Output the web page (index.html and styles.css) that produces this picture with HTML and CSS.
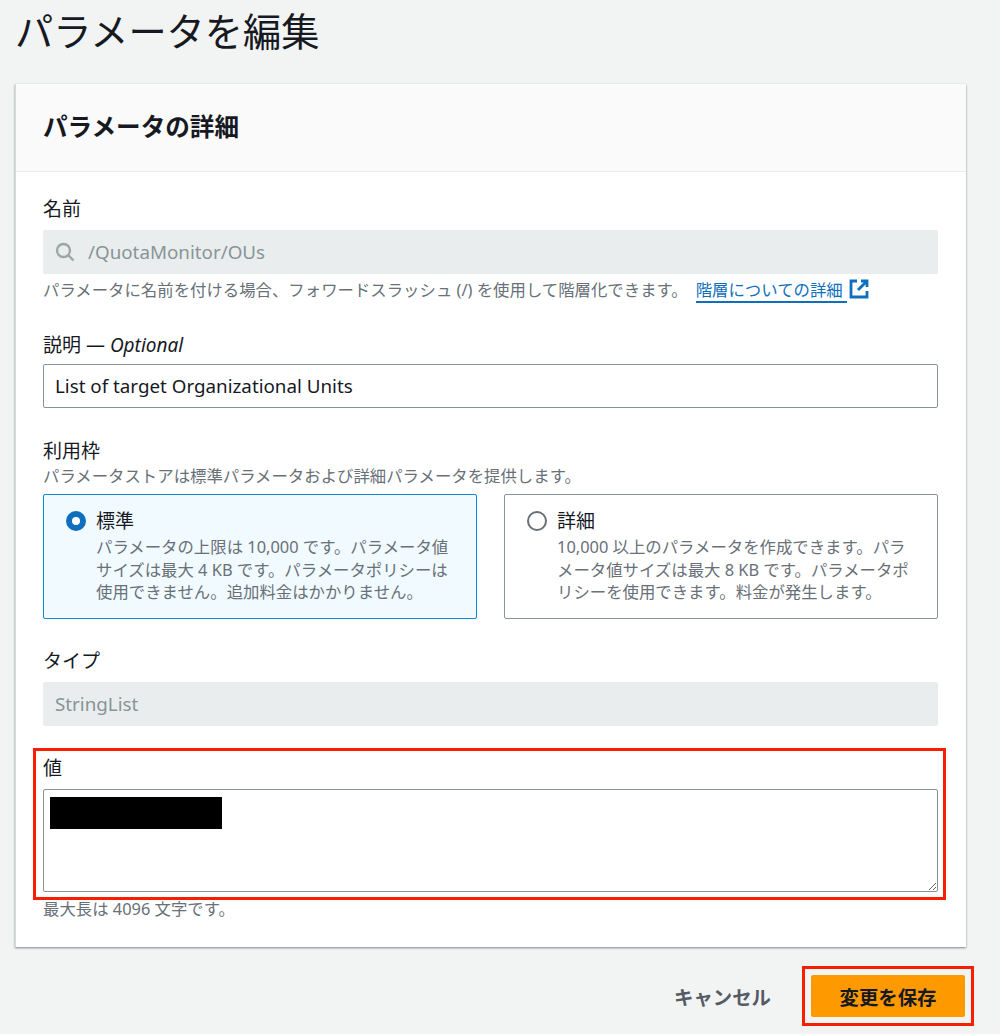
FILE: index.html
```html
<!DOCTYPE html>
<html lang="ja">
<head>
    <meta charset="UTF-8">
    <title>パラメータを編集</title>
    <link rel="stylesheet" href="styles.css">
</head>
<body>
    <h1 class="page-title">パラメータを編集</h1>

    <div class="card">
        <div class="card-header">
            <h2>パラメータの詳細</h2>
        </div>
        <div class="card-body">
            <div class="field field-name">
                <div class="label">名前</div>
                <div class="input input-disabled">
                    <svg class="search-icon" viewBox="0 0 20 20" width="20" height="20" fill="none" stroke="#9ba7a6" stroke-width="2.4">
                        <circle cx="8.5" cy="8.5" r="6.5"></circle>
                        <path d="M13.2 13.2 L18.5 18.5"></path>
                    </svg>
                    <span>/QuotaMonitor/OUs</span>
                </div>
                <div class="help help-name">
                    <span>パラメータに名前を付ける場合、フォワードスラッシュ (/) を使用して階層化できます。</span>
                    <a class="link">階層についての詳細</a>
                    <svg class="ext-icon" viewBox="0 0 20 20" width="20" height="20" fill="none" stroke="#0f6fbd" stroke-width="2.8">
                        <path d="M8 2 H2 V18 H18 V12"></path>
                        <path d="M12 2 H18 V8"></path>
                        <path d="M18 2 L9 11"></path>
                    </svg>
                </div>
            </div>

            <div class="field field-desc">
                <div class="label">説明 — <i>Optional</i></div>
                <div class="input">List of target Organizational Units</div>
            </div>

            <div class="field field-tier">
                <div class="label">利用枠</div>
                <div class="help help-tier">パラメータストアは標準パラメータおよび詳細パラメータを提供します。</div>
                <div class="tiles">
                    <div class="tile tile-selected">
                        <span class="radio radio-on"></span>
                        <div>
                            <div class="tile-title">標準</div>
                            <div class="tile-text">パラメータの上限は 10,000 です。パラメータ値<br>サイズは最大 4 KB です。パラメータポリシーは<br>使用できません。追加料金はかかりません。</div>
                        </div>
                    </div>
                    <div class="tile">
                        <span class="radio"></span>
                        <div>
                            <div class="tile-title">詳細</div>
                            <div class="tile-text">10,000 以上のパラメータを作成できます。パラ<br>メータ値サイズは最大 8 KB です。パラメータポ<br>リシーを使用できます。料金が発生します。</div>
                        </div>
                    </div>
                </div>
            </div>

            <div class="field field-type">
                <div class="label">タイプ</div>
                <div class="input input-disabled">StringList</div>
            </div>

            <div class="value-box">
                <div class="label">値</div>
                <div class="textarea-wrap">
                    <textarea class="textarea"></textarea>
                    <div class="redacted"></div>
                </div>
            </div>
            <div class="help help-value">最大長は 4096 文字です。</div>
        </div>
    </div>

    <div class="actions">
        <span class="btn-cancel">キャンセル</span>
        <div class="save-box">
            <div class="btn-save">変更を保存</div>
        </div>
    </div>
</body>
</html>
```

FILE: styles.css
```css
* {
    box-sizing: border-box;
}

body {
    margin: 0;
    height: 1034px;
    overflow: hidden;
    background: #f2f3f3;
    color: #16191f;
    font-family: "Noto Sans", "Noto Sans CJK JP", sans-serif;
    font-size: 19px;
}

.page-title {
    margin: 0;
    padding-left: 15px;
    height: 84px;
    padding-top: 7px;
    font-size: 38.2px;
    line-height: 48px;
    font-weight: 400;
}

.card {
    margin-left: 15px;
    width: 951px;
    height: 863px;
    background: #fff;
    border-left: 1px solid #d5dbdb;
    box-shadow: 0 1px 2px rgba(0, 28, 36, 0.5);
}

.card-header {
    height: 88px;
    padding: 0 28px 6px 27px;
    display: flex;
    align-items: center;
    background: #fafafa;
    border-bottom: 1px solid #eaeded;
}

.card-header h2 {
    margin: 0;
    font-size: 24.6px;
    font-weight: 700;
}

.card-body {
    padding: 23px 28px 0 27px;
}

.label {
    font-size: 19px;
    line-height: 28px;
}

.input {
    height: 44px;
    display: flex;
    align-items: center;
    padding: 0 11px;
    background: #fff;
    border: 1px solid #879596;
    border-radius: 2px;
    font-size: 18.8px;
}

.input-disabled {
    background: #eaeded;
    border-color: #eaeded;
    color: #879596;
}

.search-icon {
    margin-right: 13px;
}

.help {
    color: #687078;
    font-size: 16.4px;
    line-height: 22px;
}

.help-name {
    display: flex;
    align-items: flex-start;
    height: 24px;
    margin-top: 5px;
}

.link {
    margin-left: 8px;
    padding-right: 4px;
    color: #0f6fbd;
    border-bottom: 2px solid #0f6fbd;
}

.ext-icon {
    margin-left: 2px;
}

.field-name .label {
    margin-bottom: 7px;
}

.field-desc {
    margin-top: 28px;
}

.field-desc .label {
    margin-bottom: 5px;
}

.field-tier {
    margin-top: 29px;
}

.tiles {
    margin-top: 7px;
    display: grid;
    grid-template-columns: 434px 434px;
    column-gap: 27px;
}

.tile {
    height: 125px;
    display: flex;
    gap: 10px;
    padding: 14px 0 0 22px;
    border: 1px solid #879596;
    border-radius: 2px;
}

.tile-selected {
    background: #f1faff;
    border-color: #0f8ad6;
}

.radio {
    flex: none;
    width: 20px;
    height: 20px;
    margin-top: 2px;
    background: #fff;
    border: 2px solid #687078;
    border-radius: 50%;
}

.radio-on {
    border: 6px solid #0f6fbd;
}

.tile-title {
    font-size: 19px;
    line-height: 24px;
}

.tile-text {
    margin-top: 3px;
    color: #687078;
    font-size: 16.4px;
    line-height: 22.5px;
    white-space: nowrap;
}

.field-type {
    margin-top: 28px;
}

.field-type .label {
    margin-bottom: 7px;
}

.value-box {
    margin: 22px -8px 0 -10px;
    height: 152px;
    padding: 3px 5px 0 7px;
    border: 3px solid #f81e00;
}

.value-box .label {
    margin-bottom: 7px;
}

.textarea-wrap {
    position: relative;
    height: 103px;
}

.textarea {
    display: block;
    width: 100%;
    height: 103px;
    background: #fff;
    border: 1px solid #879596;
    border-radius: 2px;
    outline: none;
}

.redacted {
    position: absolute;
    left: 7px;
    top: 8px;
    width: 172px;
    height: 32px;
    background: #000;
}

.help-value {
    margin-top: -2px;
}

.actions {
    display: flex;
    justify-content: flex-end;
    align-items: center;
    padding: 19px 26px 0 0;
}

.btn-cancel {
    margin-right: 31px;
    color: #545b64;
    font-size: 19.4px;
    font-weight: 700;
}

.save-box {
    width: 172px;
    height: 60px;
    padding: 6px;
    border: 3px solid #f81e00;
}

.btn-save {
    height: 42px;
    display: flex;
    align-items: center;
    justify-content: center;
    background: #ff9900;
    border-radius: 2px;
    font-size: 19.4px;
    font-weight: 700;
}
```
